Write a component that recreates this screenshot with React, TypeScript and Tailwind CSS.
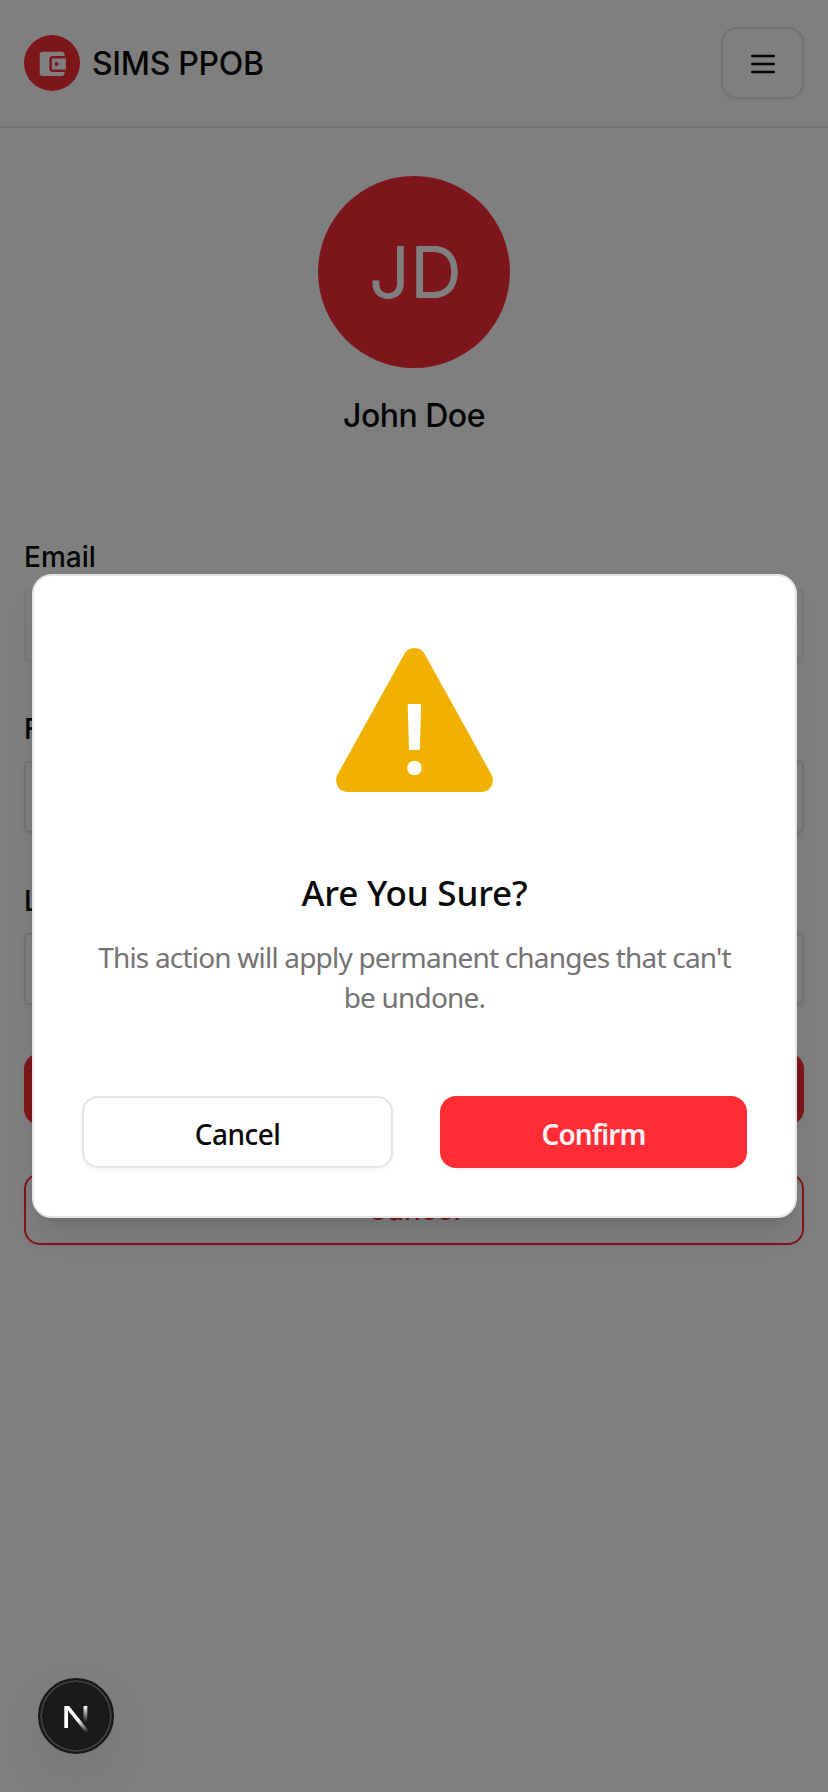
import React from "react";

function WalletIcon() {
  return (
    <svg viewBox="0 0 56 56" className="size-14 shrink-0">
      <circle cx="28" cy="28" r="28" fill="#fb2c36" />
      <path
        fill="#fff"
        fillRule="evenodd"
        d="M18.7 16.8H37.6a3 3 0 0 1 3 3V20.9H28.6a3.2 3.2 0 0 0-3.2 3.2v9.7a3.2 3.2 0 0 0 3.2 3.2h12v1a3 3 0 0 1-3 3H18.7a3 3 0 0 1-3-3V19.8a3 3 0 0 1 3-3zM28.9 23.4h13v11.1h-13a1 1 0 0 1-1-1v-9.1a1 1 0 0 1 1-1zM32.6 27a2 2 0 1 0 0.01 0z"
      />
    </svg>
  );
}

function WarningIcon() {
  return (
    <svg viewBox="336 648 157 144" className="h-[144px] w-[157px]">
      <path
        fill="#f0b100"
        d="M404.2 654.2Q407.6 648 414.5 648t10.3 6.2L491.3 774.3C495.6 782.1 490.5 792 481.3 792H347.7C338.5 792 333.4 782.1 337.7 774.3Z"
      />
      <path fill="#fff" d="M407.7 704h13.5l-1.4 46h-10.8z" />
      <circle cx="414.5" cy="768" r="7.3" fill="#fff" />
    </svg>
  );
}

function Field({ label, muted = false }: { label: string; muted?: boolean }) {
  return (
    <div className="flex flex-col gap-3">
      <label className="h-10 text-[28px] leading-10 font-medium">{label}</label>
      <div
        className={
          muted
            ? "h-[72px] rounded-[5px] border-2 border-[#e5e5e5] opacity-50 shadow-[0_2px_4px_rgba(0,0,0,0.05)]"
            : "h-[72px] rounded-[5px] border-2 border-[#e5e5e5] shadow-[0_2px_4px_rgba(0,0,0,0.05)]"
        }
      />
    </div>
  );
}

function Dialog() {
  return (
    <div
      role="alertdialog"
      className="absolute top-[574px] left-8 flex h-[644px] w-[765px] flex-col items-center rounded-[20px] border-2 border-[#e5e5e5] bg-white px-12 pt-[72px] font-['Noto_Sans','Open_Sans',sans-serif] shadow-[0_20px_30px_-6px_rgba(0,0,0,0.1),0_8px_12px_-8px_rgba(0,0,0,0.1)]"
    >
      <WarningIcon />
      <h2 className="mt-[77px] h-12 text-[35px] leading-12 font-medium tracking-[-0.2px] whitespace-nowrap text-[#0a0a0a]">
        Are You Sure?
      </h2>
      <p className="mt-5 text-center text-[28px] leading-10 tracking-[-0.8px] whitespace-nowrap text-[#737373]">
        This action will apply permanent changes that can't
        <br />
        be undone.
      </p>
      <div className="mt-[79px] flex w-full justify-between text-[28px]">
        <button className="h-[72px] w-[311px] rounded-[16px] border-2 border-[#e5e5e5] pt-[3px] font-medium tracking-[-0.5px] text-[#0a0a0a] shadow-[0_2px_4px_rgba(0,0,0,0.05)]">
          Cancel
        </button>
        <button className="h-[72px] w-[307px] rounded-[16px] bg-[#ff2c36] pt-[3px] font-semibold tracking-[-0.9px] text-[#fef2f2] shadow-[0_2px_4px_rgba(0,0,0,0.05)]">
          Confirm
        </button>
      </div>
    </div>
  );
}

function DevBadge() {
  return (
    <div className="absolute top-[1678px] left-[38px] flex size-[76px] items-center justify-center rounded-full border-2 border-[#171717] bg-[#1a1a1a] shadow-[inset_0_0_0_2px_#3f3f3f,0_20px_48px_rgba(0,0,0,0.07)]">
      <svg viewBox="0 0 72 72" className="size-[72px]" fill="none">
        <defs>
          <linearGradient id="stem" x1="45.5" y1="26" x2="45.5" y2="42" gradientUnits="userSpaceOnUse">
            <stop stopColor="#fff" />
            <stop offset="1" stopColor="#fff" stopOpacity="0" />
          </linearGradient>
          <linearGradient id="diagonal" x1="38" y1="40" x2="47" y2="53" gradientUnits="userSpaceOnUse">
            <stop stopColor="#fff" />
            <stop offset="1" stopColor="#fff" stopOpacity="0" />
          </linearGradient>
        </defs>
        <path d="M43.5 26h3.8v16h-3.8z" fill="url(#stem)" />
        <path d="M24.3 26h4.8L49 51l-2.6 2.5L28 30.5V48h-3.7z" fill="url(#diagonal)" />
      </svg>
    </div>
  );
}

export default function App() {
  return (
    <div className="relative h-[1792px] w-[828px] overflow-hidden bg-white font-['Inter','Liberation_Sans',sans-serif] text-[#0a0a0a]">
      <header className="flex h-32 items-center justify-between border-b-2 border-[#e5e5e5] px-6">
        <div className="flex items-center gap-3">
          <WalletIcon />
          <span className="pt-[2px] text-[32px] leading-10 font-medium tracking-[-0.3px]">SIMS PPOB</span>
        </div>
        <button className="flex h-[72px] w-[83px] items-center justify-center rounded-[16px] border-2 border-[#e5e5e5] pt-[2px] shadow-[0_2px_4px_rgba(0,0,0,0.05)]">
          <svg viewBox="0 0 32 32" className="size-8" stroke="#0a0a0a" strokeWidth="2.67" strokeLinecap="round">
            <path d="M5.33 8h21.34M5.33 16h21.34M5.33 24h21.34" />
          </svg>
        </button>
      </header>
      <main className="flex flex-col px-6 pt-12">
        <div className="flex size-48 items-center justify-center self-center rounded-full bg-[#fb2c36] pl-[3px] text-[72px] text-white">
          JD
        </div>
        <h1 className="mt-7 h-10 self-center text-[32px] leading-10 font-medium tracking-[-0.5px]">John Doe</h1>
        <form className="mt-[101px] flex flex-col gap-12">
          <Field label="Email" muted />
          <Field label="First Name" />
          <Field label="Last Name" />
          <button
            type="button"
            className="h-[72px] rounded-[16px] bg-[#fb2c36] text-[28px] font-medium text-white shadow-[0_2px_4px_rgba(0,0,0,0.05)]"
          >
            Save
          </button>
          <button
            type="button"
            className="h-[72px] rounded-[16px] border-2 border-[#fb2c36] pt-[2px] text-[28px] font-medium text-[#fb2c36] shadow-[0_2px_4px_rgba(0,0,0,0.05)]"
          >
            Cancel
          </button>
        </form>
      </main>
      <div className="absolute inset-0 bg-black/50" />
      <Dialog />
      <DevBadge />
    </div>
  );
}
